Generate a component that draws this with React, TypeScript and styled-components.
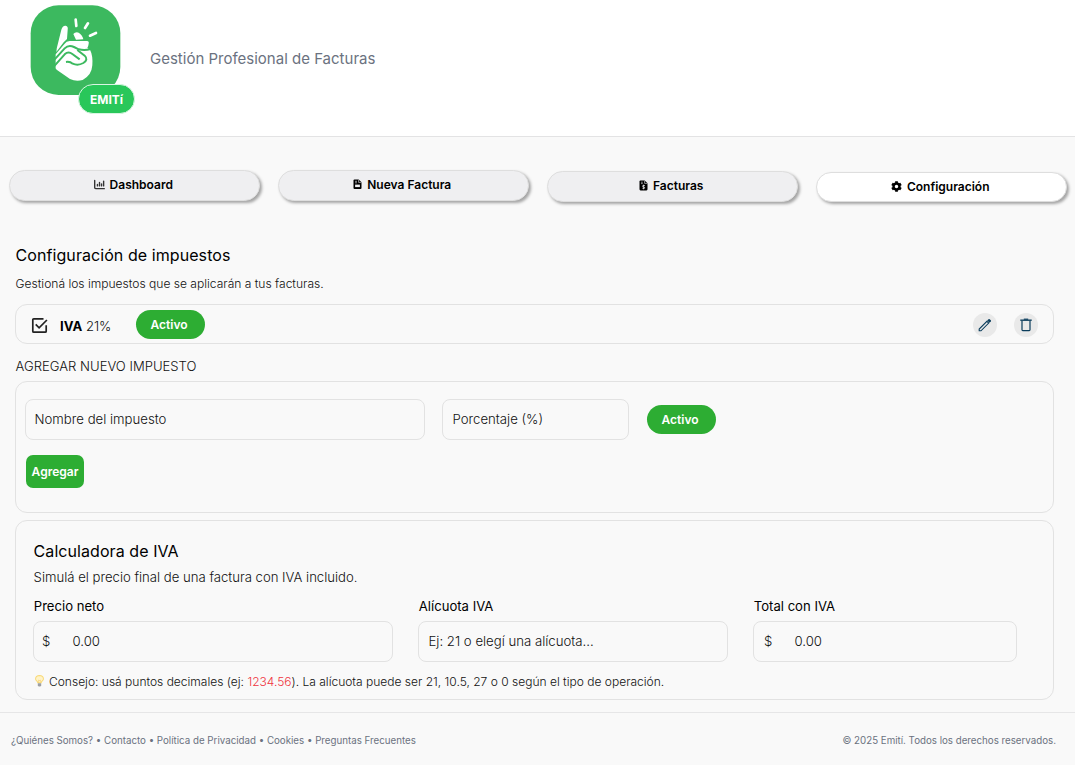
import React from "react";
import styled, { createGlobalStyle } from "styled-components";
import { FaChartColumn } from "react-icons/fa6";
import { FaCog } from "react-icons/fa";

const GlobalStyle = createGlobalStyle`
  * { box-sizing: border-box; }
  body {
    margin: 0;
    background: #f9f9f9;
    color: #111;
    font-family: Inter, "Liberation Sans", sans-serif;
  }
  h2, p { margin: 0; }
  button, input { font-family: inherit; }
`;

const Page = styled.div`
  display: flex;
  flex-direction: column;
  width: 1075px;
  height: 765px;
  overflow: hidden;
`;

const Header = styled.header`
  display: flex;
  height: 137px;
  background: #fff;
  border-bottom: 1px solid #e3e3e4;
`;

const Brand = styled.div`
  position: relative;
  width: 130px;
  height: 120px;
  margin-left: 20px;
`;

const BrandBadge = styled.span`
  position: absolute;
  left: 58px;
  top: 84px;
  width: 57px;
  height: 30px;
  display: flex;
  align-items: center;
  justify-content: center;
  border: 1px solid #d9f5e2;
  border-radius: 15px;
  background: #29c75a;
  color: #fff;
  font-size: 12px;
  font-weight: 700;
`;

const Tagline = styled.p`
  padding-top: 49px;
  font-size: 15px;
  line-height: 20px;
  color: #6b7280;
`;

const Nav = styled.nav`
  display: grid;
  grid-template-columns: repeat(4, 251px);
  gap: 18px;
  padding: 33px 0 0 9px;
  height: 108px;
`;

const Tab = styled.button<{ $active?: boolean; $drop: number; $h: number }>`
  display: flex;
  align-items: center;
  justify-content: center;
  gap: 5px;
  width: 250.5px;
  height: ${(p) => p.$h}px;
  margin: ${(p) => p.$drop}px 0 0;
  padding: 0 2px 2px 0;
  border: 1px solid #dedede;
  border-radius: 16px;
  background: ${(p) => (p.$active ? "#fff" : "#efeff1")};
  box-shadow: 2px 2px 3px rgba(0, 0, 0, 0.34);
  color: #000;
  font-size: 12px;
  font-weight: 600;
`;

const Main = styled.main`
  display: flex;
  flex-direction: column;
  height: 467px;
  padding: 0 21px 0 15px;
`;

const Title = styled.h2`
  padding-left: 0.6px;
  font-size: 16px;
  font-weight: 400;
  line-height: 20px;
  letter-spacing: 0.07px;
  color: #000;
`;

const Lead = styled.p<{ $size: number; $top: number }>`
  margin-top: ${(p) => p.$top}px;
  padding-left: 0.6px;
  font-size: ${(p) => p.$size}px;
  font-weight: 300;
  line-height: 16px;
  color: #111;
`;

const Panel = styled.section`
  border: 1px solid #e2e2e2;
  border-radius: 12px;
`;

const TaxRow = styled(Panel)`
  display: flex;
  align-items: center;
  height: 40px;
  margin-top: 12px;
  padding: 0 15.5px 0 15px;
  > svg { margin-top: 2px; }
`;

const TaxName = styled.span`
  width: 76px;
  margin-left: 12px;
  padding-top: 3px;
  font-size: 13.1px;
  font-weight: 300;
  b { font-weight: 700; color: #000; }
`;

const Status = styled.span`
  display: flex;
  align-items: center;
  justify-content: center;
  width: 69px;
  height: 29px;
  padding-right: 3px;
  border-radius: 15px;
  background: #2dad33;
  color: #fff;
  font-size: 12px;
  font-weight: 600;
`;

const RowStatus = styled(Status)`
  margin-top: 1px;
`;

const Actions = styled.div`
  display: flex;
  gap: 17px;
  margin-left: auto;
  padding-top: 1px;
`;

const IconButton = styled.button`
  display: flex;
  align-items: center;
  justify-content: center;
  width: 24px;
  height: 24px;
  padding: 0;
  border: 0;
  border-radius: 50%;
  background: #e9e9e9;
  color: #0b3d5c;
`;

const AddLabel = styled.p`
  margin: 14px 0 6px;
  padding-left: 0.6px;
  font-size: 13.1px;
  font-weight: 300;
  line-height: 17px;
`;

const AddPanel = styled(Panel)`
  height: 132px;
  padding: 17px 9px;
`;

const AddFields = styled.div`
  display: flex;
  align-items: center;
  gap: 17px;
  ${Status} { margin: 0 0 1px 1px; }
`;

const Field = styled.div<{ $width: number; $inset?: number }>`
  display: flex;
  align-items: center;
  width: ${(p) => p.$width}px;
  height: 41px;
  padding: 0 0 2px ${(p) => p.$inset ?? 8.5}px;
  border: 1px solid #e2e2e2;
  border-radius: 8px;
  font-size: 13.2px;
  font-weight: 300;
  color: #111;
`;

const Currency = styled.span`
  width: 30.5px;
`;

const AddButton = styled.button`
  display: block;
  width: 58px;
  height: 33px;
  margin: 14.5px 0 0 1px;
  padding: 0;
  border: 0;
  border-radius: 7px;
  background: #2dad33;
  color: #fff;
  font-size: 12px;
  font-weight: 600;
`;

const Calculator = styled(Panel)`
  height: 180px;
  margin-top: 7px;
  padding: 20px 17px 0;
`;

const CalcFields = styled.div`
  display: flex;
  gap: 25px;
  margin-top: 13px;
`;

const FieldLabel = styled.div`
  margin: 0 0 6px 0.8px;
  font-size: 13.1px;
  line-height: 17px;
  color: #000;
`;

const Tip = styled.p`
  display: flex;
  align-items: center;
  margin-top: 12px;
  padding-left: 2px;
  font-size: 12.03px;
  font-weight: 300;
  line-height: 16px;
  color: #111;
  white-space: pre;
  svg { margin: -2px 5px 0 0; }
  em { font-style: normal; color: #ef3340; }
`;

const Footer = styled.footer`
  display: flex;
  justify-content: space-between;
  height: 53px;
  padding: 21px 19px 0 11px;
  border-top: 1px solid #e6e6e7;
  color: #6b7280;
  font-size: 9.74px;
  line-height: 14px;
`;

const Logo = () => (
  <svg width="130" height="120" viewBox="0 0 390 360">
    <rect x="32" y="16" width="269" height="269" rx="84" fill="#3cb95f" />
    <g fill="#fff">
      <path d="M109 156 Q110 143 114 130 L124 89 Q128 76 137 77 Q145 78 143 90 L141 117 L131 127 Z" />
      <path d="M160 102 Q166 95 176 98 Q187 104 190 118 L168 119 Z" />
      <path d="M107 163 L134 131 Q139 123 149 123 H201 Q208 124 206 131 Q205 139 202 144 L210 149 Q219 166 217 196 Q215 226 188 240 Q168 246 150 237 L110 209 Q105 204 107 200 Z" />
    </g>
    <g fill="none" stroke="#3cb95f" strokeWidth="6">
      <path d="M104 178 L134 145 Q146 133 162 141 L176 148 Q194 153 212 147" />
      <path d="M104 197 L134 163 Q145 153 157 162 L179 178" />
      <path d="M138 186 Q150 184 158 191 Q174 198 190 189 Q206 179 194 167 L172 150" />
    </g>
    <path d="M167 59 L169 78 M204 70 L195 84 M210 107 L228 99" fill="none" stroke="#fff" strokeWidth="8" strokeLinecap="round" />
  </svg>
);

const DocIcon = () => (
  <svg width="9" height="11" viewBox="0 0 9 11">
    <path d="M.5 1.5Q.5.5 1.5.5H5.7L8.5 3.3V9Q8.5 10 7.5 10H1.5Q.5 10 .5 9Z" fill="#000" />
    <path d="M5.6.8V3.4H8.3M2 2.3H4M2 3.8H4" fill="none" stroke="#efeff1" strokeWidth=".6" />
    <path d="M2.1 5.6H6.9V8.1H2.1Z" fill="#efeff1" />
  </svg>
);

const InvoiceIcon = () => (
  <svg width="9" height="11" viewBox="0 0 9 11">
    <path d="M.5 1.5Q.5.5 1.5.5H5.7L8.5 3.3V9.3Q8.5 10.4 7.5 10.4H1.5Q.5 10.4 .5 9.3Z" fill="#000" />
    <path d="M5.6.8V3.4H8.3M2 2.2H3.8M2 3.6H3.8" fill="none" stroke="#efeff1" strokeWidth=".6" />
    <path d="M5.9 5.6Q3.3 4.8 3.4 6.1Q3.4 6.8 4.7 7Q6 7.3 5.7 8.1Q5.2 9 3.3 8.2M4.6 4.7V9.3" fill="none" stroke="#efeff1" strokeWidth=".75" />
  </svg>
);

const CheckIcon = () => (
  <svg width="17" height="17" viewBox="0 0 17 17" fill="none" stroke="#222" strokeWidth="1.7">
    <path d="M12.5 1.8H2.8Q1.8 1.8 1.8 2.8V14.2Q1.8 15.2 2.8 15.2H14.2Q15.2 15.2 15.2 14.2V8.2" />
    <path d="M4.7 7.4L8.1 10.8L15.9 3" />
  </svg>
);

const PencilIcon = () => (
  <svg width="14" height="14" viewBox="0 0 14 14">
    <path d="M1.2 12.8V11L8.9 3.3L10.7 5.1L3 12.8Z" fill="none" stroke="currentColor" strokeWidth="1.1" />
    <path d="M9.2 2.5L10.5 1.2Q11.1.7 11.7 1.2L12.8 2.3Q13.3 2.9 12.8 3.5L11.5 4.8Z" fill="currentColor" />
  </svg>
);

const TrashIcon = () => (
  <svg width="12" height="14" viewBox="0 0 12 14" fill="none" stroke="currentColor">
    <path d="M.3 2.2H11.7" strokeWidth="1.4" />
    <path d="M3.8 1.2H8.2" strokeWidth="1.2" />
    <path d="M2 3V11.8Q2 12.6 2.8 12.6H9.2Q10 12.6 10 11.8V3" strokeWidth="1.2" />
  </svg>
);

const BulbIcon = () => (
  <svg width="9" height="12" viewBox="0 0 8 12" preserveAspectRatio="none">
    <path d="M2.5 7.8Q2.4 6.7 1.3 5.7Q.5 4.8.5 3.7Q.8.6 4 .5Q7.2.6 7.5 3.7Q7.5 4.8 6.7 5.7Q5.6 6.7 5.5 7.8Z" fill="#fff3c9" stroke="#f8d978" strokeWidth=".9" />
    <path d="M3.2 7.7V5L4 5.5L4.8 5V7.7" fill="none" stroke="#f6c95b" strokeWidth=".5" />
    <path d="M2.5 8.2H5.5V10.4L4.7 11.4H3.3L2.5 10.4Z" fill="#9d9fa2" />
  </svg>
);

export default function App() {
  return (
    <Page>
      <GlobalStyle />
      <Header>
        <Brand>
          <Logo />
          <BrandBadge>EMITí</BrandBadge>
        </Brand>
        <Tagline>Gestión Profesional de Facturas</Tagline>
      </Header>
      <Nav>
        <Tab $drop={0} $h={31}><FaChartColumn size={11} color="#333" />Dashboard</Tab>
        <Tab $drop={0} $h={31}><DocIcon />Nueva Factura</Tab>
        <Tab $drop={1} $h={31}><InvoiceIcon />Facturas</Tab>
        <Tab $drop={2} $h={30} $active><FaCog size={11} />Configuración</Tab>
      </Nav>
      <Main>
        <Title>Configuración de impuestos</Title>
        <Lead $size={12.05} $top={11}>Gestioná los impuestos que se aplicarán a tus facturas.</Lead>
        <TaxRow>
          <CheckIcon />
          <TaxName><b>IVA</b> 21%</TaxName>
          <RowStatus>Activo</RowStatus>
          <Actions>
            <IconButton aria-label="Editar"><PencilIcon /></IconButton>
            <IconButton aria-label="Eliminar"><TrashIcon /></IconButton>
          </Actions>
        </TaxRow>
        <AddLabel>AGREGAR NUEVO IMPUESTO</AddLabel>
        <AddPanel>
          <AddFields>
            <Field $width={400}>Nombre del impuesto</Field>
            <Field $width={187} $inset={9.5}>Porcentaje (%)</Field>
            <Status>Activo</Status>
          </AddFields>
          <AddButton>Agregar</AddButton>
        </AddPanel>
        <Calculator>
          <Title>Calculadora de IVA</Title>
          <Lead $size={13.15} $top={8}>Simulá el precio final de una factura con IVA incluido.</Lead>
          <CalcFields>
            <div>
              <FieldLabel>Precio neto</FieldLabel>
              <Field $width={360} $inset={8}><Currency>$</Currency>0.00</Field>
            </div>
            <div>
              <FieldLabel>Alícuota IVA</FieldLabel>
              <Field $width={310} $inset={9.5}>Ej: 21 o elegí una alícuota...</Field>
            </div>
            <div>
              <FieldLabel>Total con IVA</FieldLabel>
              <Field $width={264} $inset={10}><Currency>$</Currency>0.00</Field>
            </div>
          </CalcFields>
          <Tip><BulbIcon />Consejo: usá puntos decimales (ej: <em>1234.56</em>). La alícuota puede ser 21, 10.5, 27 o 0 según el tipo de operación.</Tip>
        </Calculator>
      </Main>
      <Footer>
        <span>¿Quiénes Somos? • Contacto • Política de Privacidad • Cookies • Preguntas Frecuentes</span>
        <span>© 2025 Emití. Todos los derechos reservados.</span>
      </Footer>
    </Page>
  );
}
